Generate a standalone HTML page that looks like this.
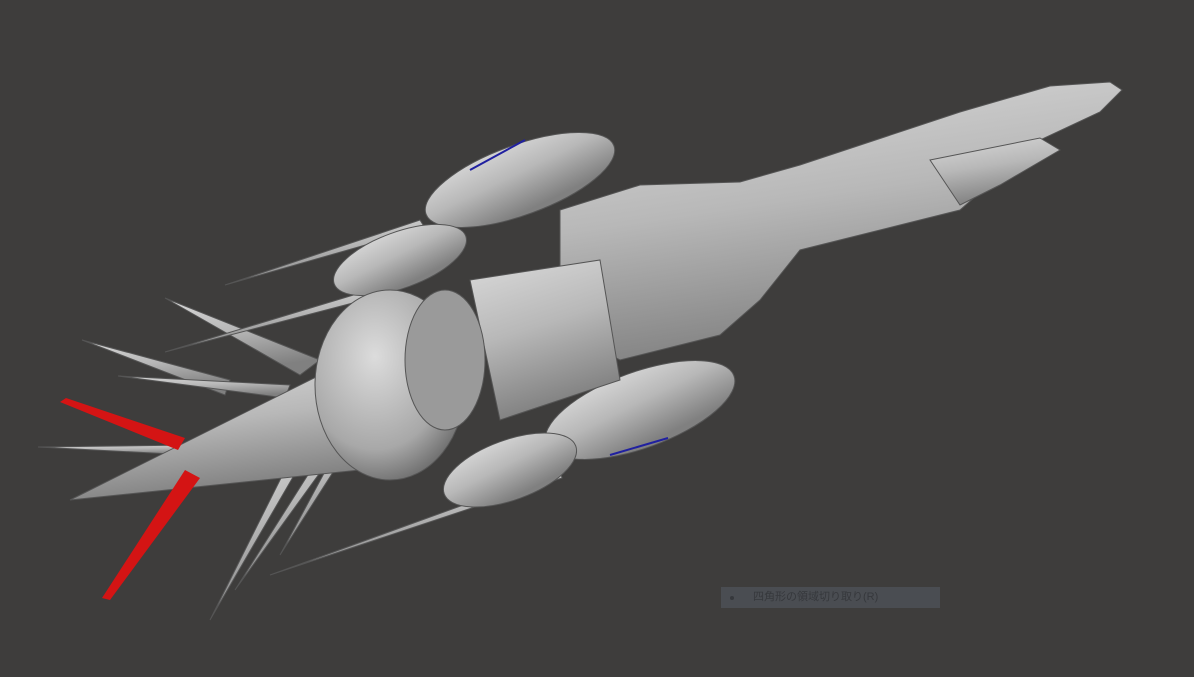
<!DOCTYPE html>
<html><head><meta charset="utf-8"><style>
html,body{margin:0;padding:0;background:#3e3d3c;width:1194px;height:677px;overflow:hidden}
.m{position:absolute;left:721px;top:587px;width:219px;height:21px;background:#4a4d52;color:#36383c;font:11px "Liberation Sans","Noto Sans CJK JP",sans-serif;line-height:21px}
.m span{position:absolute;left:32px}
.m i{position:absolute;left:9px;top:9px;width:4px;height:4px;background:#36383c;border-radius:2px}
</style></head><body>
<svg width="1194" height="677" style="position:absolute;left:0;top:0">
<defs>
<linearGradient id="g" x1="0" y1="0" x2="0.3" y2="1"><stop offset="0" stop-color="#dadada"/><stop offset="0.5" stop-color="#b8b8b8"/><stop offset="1" stop-color="#808080"/></linearGradient>
<radialGradient id="r" cx="0.4" cy="0.35" r="0.7"><stop offset="0" stop-color="#dcdcdc"/><stop offset="0.7" stop-color="#a8a8a8"/><stop offset="1" stop-color="#6a6a6a"/></radialGradient>
</defs>
<g stroke="#555" stroke-width="1" fill="url(#g)">
<polygon points="82,340 230,380 225,395"/>
<polygon points="165,298 320,360 300,375"/>
<polygon points="118,376 290,385 285,398"/>
<polygon points="38,447 190,445 190,455"/>
<polygon points="210,620 290,460 300,465"/>
<polygon points="235,590 330,440 340,445"/>
<polygon points="280,555 350,425 360,430"/>
<polygon points="225,285 420,220 425,228"/>
<polygon points="165,352 370,290 372,298"/>
<polygon points="270,575 560,470 562,478"/>
<!-- main fuselage -->
<polygon points="560,210 640,185 740,182 800,165 960,112 1050,86 1110,82 1122,90 1100,112 1040,140 960,210 900,225 800,250 760,300 720,335 620,360 560,330"/>
<polygon points="930,160 1040,138 1060,150 1000,185 960,205"/>
<ellipse cx="520" cy="180" rx="100" ry="35" transform="rotate(-20 520 180)"/>
<ellipse cx="640" cy="410" rx="100" ry="38" transform="rotate(-20 640 410)"/>
<ellipse cx="510" cy="470" rx="70" ry="30" transform="rotate(-20 510 470)"/>
<ellipse cx="400" cy="260" rx="70" ry="28" transform="rotate(-20 400 260)"/>
<polygon points="470,280 600,260 620,380 500,420"/>
<polygon points="70,500 330,370 360,470"/>
<ellipse cx="390" cy="385" rx="75" ry="95" fill="url(#r)"/>
<ellipse cx="445" cy="360" rx="40" ry="70" fill="#9a9a9a"/>
</g>
<g fill="#d41414">
<polygon points="60,402 66,398 185,438 178,450"/>
<polygon points="102,598 185,470 200,478 110,600"/>
</g>
<line x1="470" y1="170" x2="525" y2="140" stroke="#2020a0" stroke-width="2"/>
<line x1="610" y1="455" x2="668" y2="438" stroke="#2020a0" stroke-width="2"/>
</svg>
<div class="m"><i></i><span>四角形の領域切り取り(R)</span></div>
</body></html>
